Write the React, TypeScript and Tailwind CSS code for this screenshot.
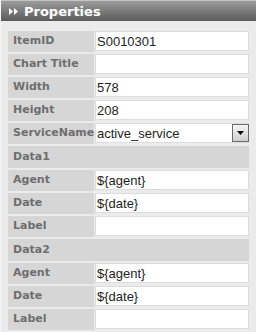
import React from 'react';

type Row =
    | { kind: 'field'; label: string; value?: string; select?: boolean }
    | { kind: 'section'; label: string };

const rows: Row[] = [
    { kind: 'field', label: 'ItemID', value: 'S0010301' },
    { kind: 'field', label: 'Chart Title', value: '' },
    { kind: 'field', label: 'Width', value: '578' },
    { kind: 'field', label: 'Height', value: '208' },
    { kind: 'field', label: 'ServiceName', value: 'active_service', select: true },
    { kind: 'section', label: 'Data1' },
    { kind: 'field', label: 'Agent', value: '${agent}' },
    { kind: 'field', label: 'Date', value: '${date}' },
    { kind: 'field', label: 'Label', value: '' },
    { kind: 'section', label: 'Data2' },
    { kind: 'field', label: 'Agent', value: '${agent}' },
    { kind: 'field', label: 'Date', value: '${date}' },
    { kind: 'field', label: 'Label', value: '' },
];

const labelFont = { fontFamily: '"DejaVu Sans", Verdana, sans-serif' };

function DoubleArrow() {
    return (
        <svg width="9" height="7" viewBox="0 0 9 7" className="shrink-0">
            <polygon points="0,0 4,3.5 0,7" fill="#fff" />
            <polygon points="5,0 9,3.5 5,7" fill="#fff" />
        </svg>
    );
}

export default function App() {
    return (
        <div className="w-[256px] h-[332px] overflow-hidden bg-[#ebebeb] border-l border-[#f6f6f6]">
            <div className="h-[21px] flex items-center gap-[6px] pl-[8px] bg-gradient-to-b from-[#9c9c9c] to-[#5c5c5c] border-t border-[#c4c4c4]">
                <DoubleArrow />
                <span className="text-[13px] font-bold text-white leading-none" style={labelFont}>
                    Properties
                </span>
            </div>

            <div className="grid grid-cols-[86px_1fr] gap-y-[2px] gap-x-[1px] pt-[10px] pl-[7px] pr-[7px]">
                {rows.map((row, i) =>
                    row.kind === 'section' ? (
                        <div
                            key={i}
                            className="col-span-2 h-[22px] bg-[#d6d6d6] pl-[5px] flex items-center text-[11px] font-bold text-[#6e6e6e]"
                            style={labelFont}
                        >
                            {row.label}
                        </div>
                    ) : (
                        <React.Fragment key={i}>
                            <div
                                className="h-[21px] bg-[#d6d6d6] pl-[5px] flex items-center text-[11px] font-bold text-[#6e6e6e] whitespace-nowrap"
                                style={labelFont}
                            >
                                {row.label}
                            </div>
                            <div className="h-[20px] bg-white border border-[#dcdcdc] flex items-center pl-[1px] text-[13px] text-[#1e1e1e] font-['Liberation_Sans',Arial,sans-serif]">
                                <span className="flex-1 leading-none">{row.value}</span>
                                {row.select && (
                                    <div className="w-[17px] h-[18px] mr-[-1px] border border-[#6b6b6b] bg-gradient-to-b from-[#f5f5f5] to-[#cfcfcf] flex items-center justify-center">
                                        <svg width="7" height="4" viewBox="0 0 7 4">
                                            <polygon points="0,0 7,0 3.5,4" fill="#000" />
                                        </svg>
                                    </div>
                                )}
                            </div>
                        </React.Fragment>
                    )
                )}
            </div>
        </div>
    );
}
